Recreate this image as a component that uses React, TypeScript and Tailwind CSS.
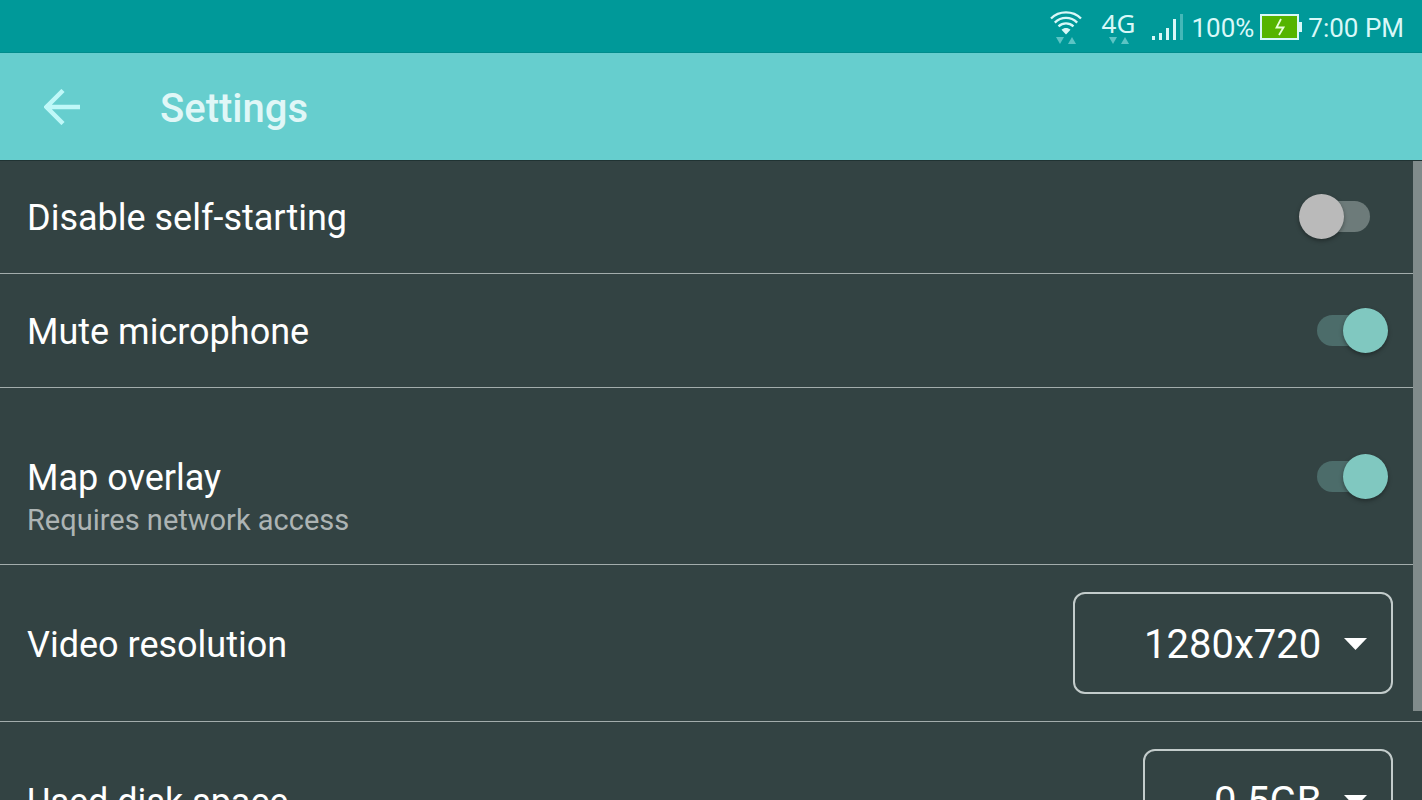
import type { ReactNode } from "react";

function DataArrows() {
  return (
    <svg width="20" height="8" viewBox="0 0 20 8" fill="#5cc4c4" aria-hidden="true">
      <path d="M0 0h8L4 7z" />
      <path d="M12 7h8l-4-7z" />
    </svg>
  );
}

function StatusBar() {
  return (
    <div className="flex h-[53px] shrink-0 items-center justify-end border-b border-[#008c8c] bg-[#009999] pr-[18px] pt-[2px] text-[26px] leading-8 text-[#d9f8f8]">
      {/* Wifi */}
      <div className="mr-5 flex h-9 flex-col items-center justify-between pt-[2px]">
        <svg width="32" height="24" viewBox="0 0 32 24" fill="none" stroke="#d9f8f8" strokeWidth="2.3" aria-hidden="true">
          <path d="M1 7.5C9 -.7 23 -.7 31 7.5" />
          <path d="M4.8 11.6c6.4-6.2 16-6.2 22.4 0" />
          <path d="M8.500 15.300c4.400-4 10.600-4 15 0" />
          <path d="M11.500 18.800c2.800-2.400 6.200-2.400 9 0L16 23.500z" fill="#d9f8f8" stroke="none" />
        </svg>
        <DataArrows />
      </div>

      {/* Mobile network */}
      <div className="mr-4 flex h-9 flex-col items-center justify-between pt-[2px]">
        <span className="font-['Noto_Sans',sans-serif] leading-6">4G</span>
        <DataArrows />
      </div>
      <svg className="mr-2" width="32" height="28" viewBox="0 0 32 28" fill="#d9f8f8" aria-hidden="true">
        <path d="M1 23h3v4H1zM8 20h3v7H8zM15 15h3v12h-3zM22 6h3v21h-3z" />
        <path d="M29 1h3v26h-3z" fill="#45b8b8" />
      </svg>

      <span className="pt-[2px]">100%</span>
      <svg className="mx-1.5" width="42" height="26" viewBox="0 0 42 26" aria-hidden="true">
        <path d="M1 1h37v24H1z" fill="#55b400" stroke="#d9f8f8" strokeWidth="2" />
        <path d="M39 8h3v10h-3z" fill="#d9f8f8" />
        <path d="M21 5l-4.500 8.500h7L19 21" fill="none" stroke="#e8ffd8" strokeWidth="1.800" />
      </svg>
      <span className="pt-[2px]">7:00 PM</span>
    </div>
  );
}

function Row({ id, label, children }: { id: string; label: string; children: ReactNode }) {
  return (
    <div className="flex items-center justify-between">
      <label htmlFor={id} className="pt-[3px] text-[36px] leading-[42px]">
        {label}
      </label>
      {children}
    </div>
  );
}

function Switch({ id, defaultChecked }: { id: string; defaultChecked?: boolean }) {
  return (
    <input
      id={id}
      type="checkbox"
      role="switch"
      defaultChecked={defaultChecked}
      className="relative mr-[5px] h-[45px] w-[89px] cursor-pointer appearance-none before:absolute before:left-[18px] before:top-[7px] before:h-[31px] before:w-[53px] before:rounded-full before:bg-[#6d7b7a] before:content-[''] after:absolute after:left-0 after:top-0 after:size-[45px] after:rounded-full after:bg-[#bababa] after:shadow-[0_2px_4px_rgba(0,0,0,0.35)] after:content-[''] checked:before:bg-[#4c6c6a] checked:after:left-[44px] checked:after:bg-[#80c8c0]"
    />
  );
}

function Dropdown({ id, options }: { id: string; options: string[] }) {
  return (
    <div className="relative">
      <select
        id={id}
        className="h-[102px] cursor-pointer appearance-none rounded-xl border-2 border-[#c3cccb] bg-transparent px-[69px] pt-1 text-[40px]"
      >
        {options.map((option) => (
          <option key={option}>{option}</option>
        ))}
      </select>
      <svg
        className="pointer-events-none absolute right-[26px] top-[46px]"
        width="23"
        height="12"
        viewBox="0 0 23 12"
        fill="#ffffff"
        aria-hidden="true"
      >
        <path d="M0 0h23L11.500 12z" />
      </svg>
    </div>
  );
}

export default function App() {
  return (
    <div className="flex h-screen flex-col overflow-hidden bg-[#334343] font-[Roboto,sans-serif] text-white">
      <StatusBar />

      <header className="flex h-[107px] shrink-0 items-center bg-[#66cece] pl-11">
        <button type="button" aria-label="Back" className="cursor-pointer">
          <svg width="36" height="36" viewBox="0 0 36 36" fill="none" stroke="#bff8f8" strokeWidth="4.500" aria-hidden="true">
            <path d="M36 18H4M19 1.500L2.500 18 19 34.500" />
          </svg>
        </button>
        <h1 className="ml-20 pt-1 text-[40px] font-medium leading-[48px] text-[#e0f7f7]">Settings</h1>
      </header>

      <main className="relative flex-1 overflow-hidden border-t border-[#203333]">
        <div className="border-b border-[#a3adac] pb-[34px] pl-[27px] pr-[29px] pt-[33px]">
          <Row id="self-starting" label="Disable self-starting">
            <Switch id="self-starting" />
          </Row>
        </div>

        <div className="border-b border-[#a3adac] py-[34px] pl-[27px] pr-[29px]">
          <Row id="mute" label="Mute microphone">
            <Switch id="mute" defaultChecked />
          </Row>
        </div>

        <div className="border-b border-[#a3adac] pb-[23px] pl-[27px] pr-[29px] pt-[66px]">
          <Row id="map" label="Map overlay">
            <Switch id="map" defaultChecked />
          </Row>
          <p className="text-[29px] leading-[42px] text-[#adb4b4]">Requires network access</p>
        </div>

        <div className="border-b border-[#a3adac] py-[27px] pl-[27px] pr-[29px]">
          <Row id="resolution" label="Video resolution">
            <Dropdown id="resolution" options={["1280x720"]} />
          </Row>
        </div>

        <div className="border-b border-[#a3adac] py-[27px] pl-[27px] pr-[29px]">
          <Row id="disk" label="Used disk space">
            <Dropdown id="disk" options={["0.5GB"]} />
          </Row>
        </div>

        {/* Scroll indicator */}
        <div className="absolute right-0 top-0 h-[86%] w-[9px] bg-[#808b8b]" />
      </main>
    </div>
  );
}
